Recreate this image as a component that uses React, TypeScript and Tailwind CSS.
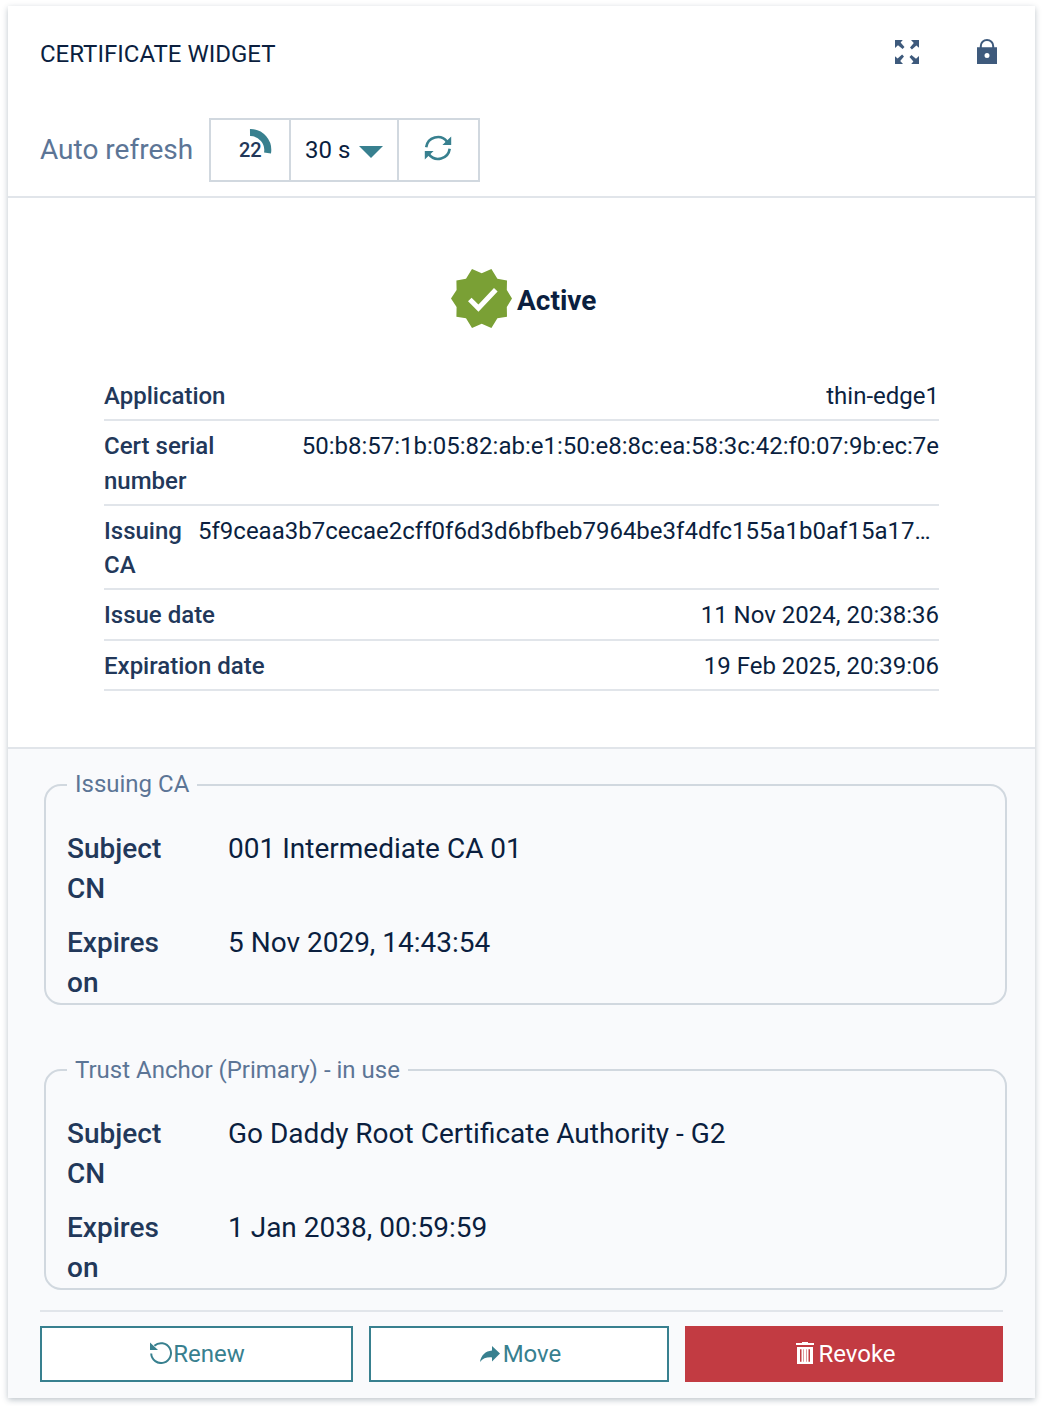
import React from "react";

const details = [
  { label: "Application", value: "thin-edge1", labelWidth: "w-[180px]", valueClass: "" },
  {
    label: "Cert serial number",
    value: "50:b8:57:1b:05:82:ab:e1:50:e8:8c:ea:58:3c:42:f0:07:9b:ec:7e",
    labelWidth: "w-[150px]",
    valueClass: "",
  },
  {
    label: "Issuing CA",
    value: "5f9ceaa3b7cecae2cff0f6d3d6bfbeb7964be3f4dfc155a1b0af15a17…",
    labelWidth: "w-[78px]",
    valueClass: "grow",
  },
  { label: "Issue date", value: "11 Nov 2024, 20:38:36", labelWidth: "w-[200px]", valueClass: "" },
  { label: "Expiration date", value: "19 Feb 2025, 20:39:06", labelWidth: "w-[200px]", valueClass: "" },
];

function ExpandIcon() {
  return (
    <svg width="24" height="24" viewBox="0 0 24 24" fill="#3e5a7c">
      {["", "rotate(90 12 12)", "rotate(180 12 12)", "rotate(270 12 12)"].map((t) => (
        <path key={t} transform={t} d="M0 0h7.800L5.600 2.600l3.900 4.500-1.900 1.900-4.600-3.800L0 8z" />
      ))}
    </svg>
  );
}

function LockIcon() {
  return (
    <svg className="-mt-[2px]" width="20" height="25" viewBox="0 0 20 25">
      <path d="M3.800 9V7a6.200 6 0 0 1 12.400 0v2" fill="none" stroke="#3e5a7c" strokeWidth="2" />
      <path
        fill="#3e5a7c"
        fillRule="evenodd"
        d="M0 8.200h20V25H0zM10 14a2.500 2.500 0 1 0 0 5 2.500 2.500 0 0 0 0-5z"
      />
    </svg>
  );
}

function RefreshIcon() {
  return (
    <svg className="mr-px" width="28" height="28" viewBox="0 0 28 28">
      <g fill="none" stroke="#38808f" strokeWidth="2.600">
        <path d="M2.200 13.200A11.700 11.700 0 0 1 23 7.600" />
        <path d="M25.700 14.800A11.700 11.700 0 0 1 4.900 20.400" />
      </g>
      <path fill="#38808f" d="M27.200 2.600V11h-8.800zM.800 25.400V17h8.800z" />
    </svg>
  );
}

function VerifiedIcon() {
  return (
    <svg width="61" height="59" viewBox="0 0 61 59">
      <path
        fill="#7aa035"
        d="M21 0l9.700 4.200L40.400 0l6 9.800 9.600 1.600-.2 9.700 5.200 8.400-5.200 8.600.2 9.600-9.600 1.600-6 9.700-9.700-4.200L21 59l-6-9.700-9.600-1.600.2-9.600L0 29.500l5.600-8.400-.2-9.700L15 9.800z"
      />
      <path d="M18.800 30.500l8.600 8.600L44.800 20.700" fill="none" stroke="#fff" strokeWidth="5" />
    </svg>
  );
}

function RenewIcon() {
  return (
    <svg className="-mt-[2px] ml-[2px]" width="23" height="22" viewBox="0 0 23 22">
      <path
        d="M1.200 11.500A9.900 9.900 0 1 0 4.400 3.800"
        fill="none"
        stroke="#38808f"
        strokeWidth="2"
      />
      <path fill="#38808f" d="M0 .5L8 8H0z" />
    </svg>
  );
}

function MoveIcon() {
  return (
    <svg className="mt-[-1px] mr-[3px] ml-[3px]" width="20" height="16" viewBox="0 0 20 16">
      <path fill="#38808f" d="M12 0l8 7.500-8 8V11.400C6.800 11 3 12.300 0 16 1 9 5.500 5 12 4.400z" />
    </svg>
  );
}

function TrashIcon() {
  return (
    <svg className="-mt-[3px] mr-[4px] ml-[4px]" width="18" height="22" viewBox="0 0 18 22">
      <path fill="#fff" d="M0 1h6V0h6v1h6v2H0z" />
      <path
        fill="#fff"
        fillRule="evenodd"
        d="M1 5h16v17H1zM4 7.200v12.500h1.500V7.200zM7.300 7.200v12.500H7.800V7.200zM10.200 7.200v12.500h.5V7.200zM12.500 7.200v12.500H14V7.200z"
      />
    </svg>
  );
}

function Authority({
  title,
  subject,
  expires,
  className,
  titleClass,
}: {
  title: string;
  subject: string;
  expires: string;
  className: string;
  titleClass: string;
}) {
  return (
    <fieldset
      className={
        "ml-9 w-[963px] rounded-[17px] border-2 border-[#d1d8df] pl-[21px] text-[28px] leading-[40px] " +
        className
      }
    >
      <legend className={"h-[34px] px-2 text-[24px] text-[#5c7596] " + titleClass}>{title}</legend>
      <dl className="mt-[27px] grid h-[174px] grid-cols-[161px_1fr] content-start gap-y-[14px]">
        <dt className="w-[110px] font-medium text-[#22385a]">Subject CN</dt>
        <dd>{subject}</dd>
        <dt className="w-[110px] font-medium text-[#22385a]">Expires on</dt>
        <dd>{expires}</dd>
      </dl>
    </fieldset>
  );
}

export default function App() {
  return (
    <div className="h-[1406px] w-[1046px] overflow-hidden bg-white pt-[6px] pl-2 font-['Roboto',sans-serif] text-[#0b1f3f]">
      <main className="flex h-[1392px] w-[1027px] flex-col bg-white shadow-[0_2px_6px_rgba(20,45,70,0.28)]">
        <header className="h-[192px] border-b-2 border-[#e1e5ea]">
          <div className="flex h-[92px] items-center pr-[38px] pl-8">
            <h1 className="mt-[3px] grow text-[24px] leading-[34px]">CERTIFICATE WIDGET</h1>
            <button className="mr-[58px]" aria-label="Expand">
              <ExpandIcon />
            </button>
            <button aria-label="Lock">
              <LockIcon />
            </button>
          </div>
          <div className="mt-5 flex h-16 items-center pl-8">
            <span className="w-[169px] text-[28px] leading-[40px] text-[#5c7596]">Auto refresh</span>
            <div className="flex h-16 w-[271px] divide-x-2 divide-[#d1d8df] border-2 border-[#d1d8df]">
              <div className="relative w-[80px]">
                <svg className="absolute top-[9px] left-[38px]" width="24" height="26" viewBox="0 0 24 26">
                  <path d="M1 3.500A17.500 17.500 0 0 1 18.500 24" fill="none" stroke="#38808f" strokeWidth="7" />
                </svg>
                <span className="absolute top-[18px] left-[28px] text-[20px] leading-[24px] font-medium text-[#22385a]">
                  22
                </span>
              </div>
              <div className="flex w-[108px] items-center pl-[14px] text-[24px]">
                <span className="w-[54px]">30 s</span>
                <svg className="mt-[4px]" width="24" height="12" viewBox="0 0 24 12">
                  <path d="M0 0h24L12 12z" fill="#38808f" />
                </svg>
              </div>
              <button className="flex grow items-center justify-center pb-[4px]" aria-label="Refresh">
                <RefreshIcon />
              </button>
            </div>
          </div>
        </header>

        <section className="h-[551px] border-b-2 border-[#e1e5ea] px-24">
          <div className="flex h-[173px] items-start pt-[71px] pl-[347px]">
            <VerifiedIcon />
            <strong className="mt-[12px] ml-[5px] text-[28px] leading-[40px] font-bold">Active</strong>
          </div>
          <dl className="w-[835px] text-[24px] leading-[34.300px]">
            {details.map((d) => (
              <div
                key={d.label}
                className="flex justify-between border-b-2 border-[#e1e5ea] pt-2 pb-[6px]"
              >
                <dt className={"shrink-0 font-medium text-[#22385a] " + d.labelWidth}>{d.label}</dt>
                <dd className={"ml-4 whitespace-nowrap " + d.valueClass}>{d.value}</dd>
              </div>
            ))}
          </dl>
        </section>

        <footer className="flex grow flex-col bg-[#f9fafc]">
          <Authority
            className="mt-[19px]"
            titleClass="leading-[33px]"
            title="Issuing CA"
            subject="001 Intermediate CA 01"
            expires="5 Nov 2029, 14:43:54"
          />
          <Authority
            className="mt-12"
            titleClass="leading-[35px]"
            title="Trust Anchor (Primary) - in use"
            subject="Go Daddy Root Certificate Authority - G2"
            expires="1 Jan 2038, 00:59:59"
          />
          <div className="mt-5 ml-8 flex w-[963px] gap-4 border-t-2 border-[#e1e5ea] pt-[14px] text-[24px]">
            <button className="flex h-14 w-[313px] items-center justify-center border-2 border-[#38808f] bg-white text-[#38808f]">
              <RenewIcon />
              Renew
            </button>
            <button className="flex h-14 w-[300px] items-center justify-center border-2 border-[#38808f] bg-white text-[#38808f]">
              <MoveIcon />
              Move
            </button>
            <button className="flex h-14 grow items-center justify-center bg-[#c23b42] text-white">
              <TrashIcon />
              Revoke
            </button>
          </div>
        </footer>
      </main>
    </div>
  );
}
